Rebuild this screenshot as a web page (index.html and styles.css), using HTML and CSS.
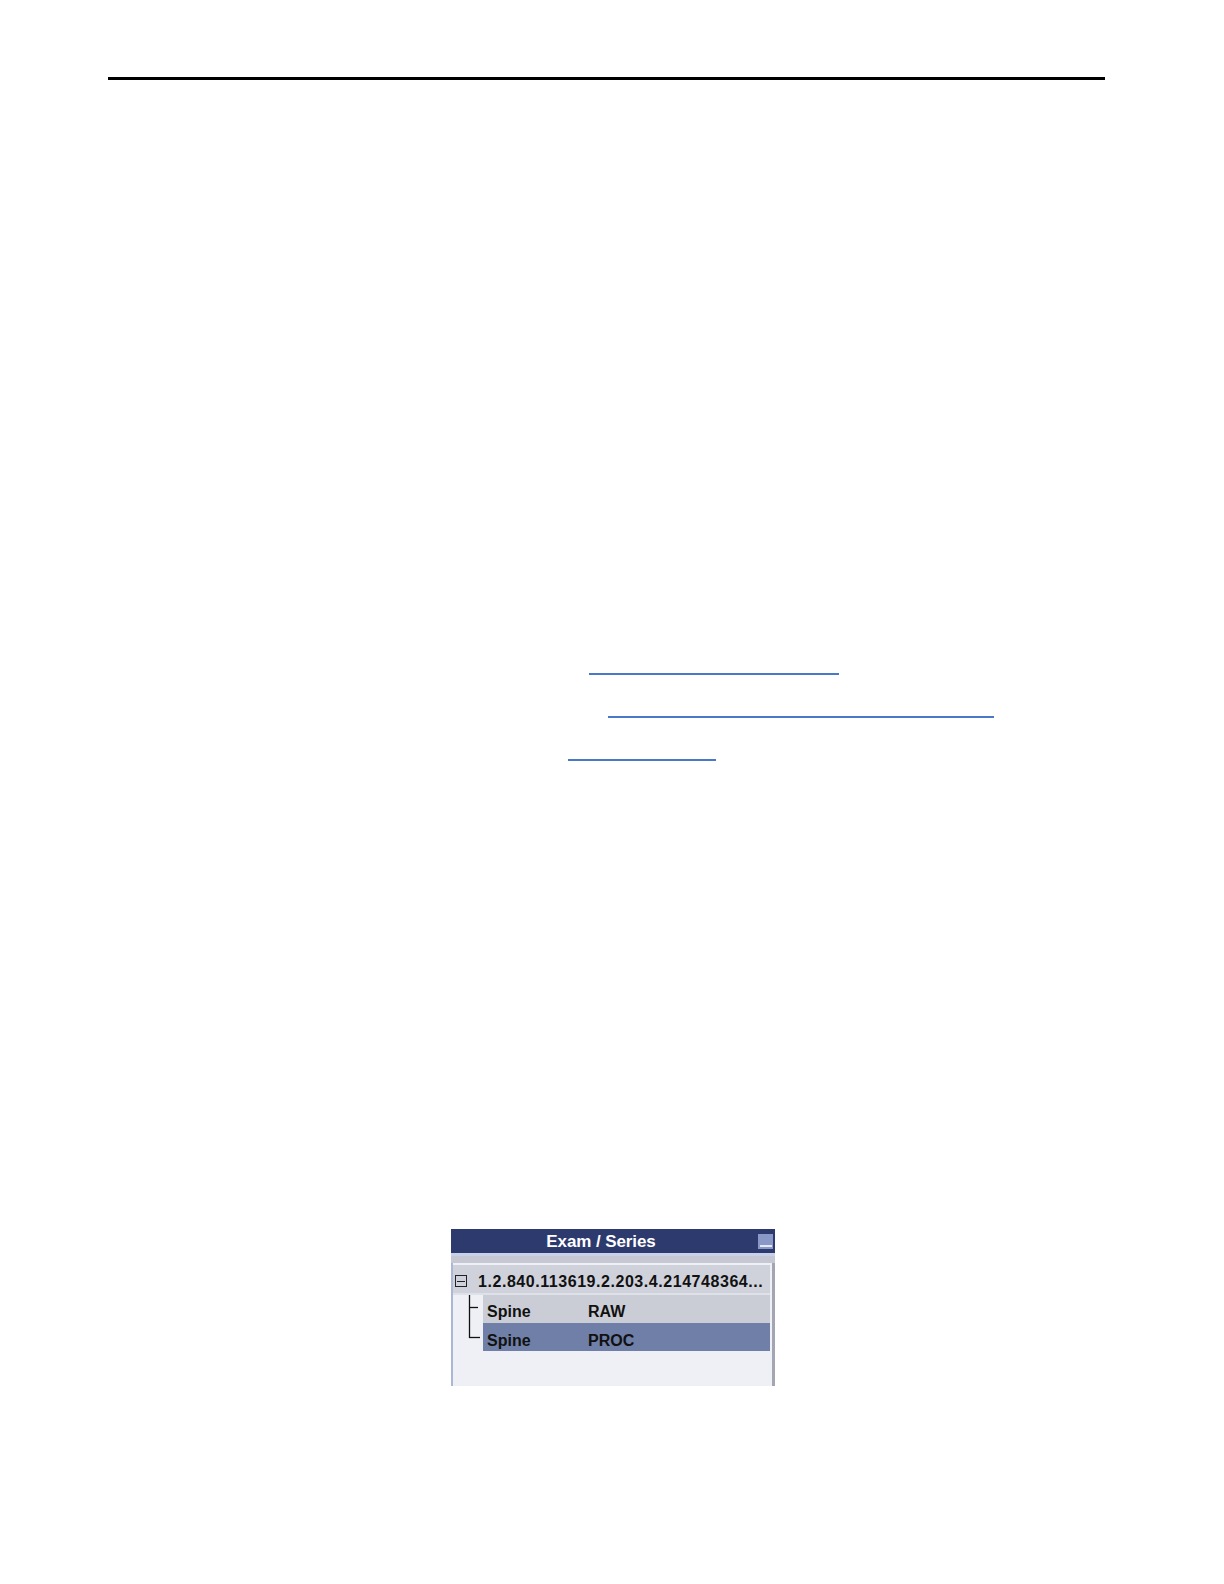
FILE: index.html
```html
<!DOCTYPE html>
<html>
<head>
<meta charset="utf-8">
<link rel="stylesheet" href="styles.css">
</head>
<body>
<div class="page">
  <div class="top-rule"></div>
  <div class="links">
    <div class="link-line l1"></div>
    <div class="link-line l2"></div>
    <div class="link-line l3"></div>
  </div>
  <div class="figure">
    <div class="panel">
      <div class="panel-header">
        <span class="panel-title">Exam / Series</span>
        <span class="min-btn"><span class="min-bar"></span></span>
      </div>
      <div class="panel-strip"></div>
      <div class="panel-body">
        <div class="exam-row">
          <span class="collapse-box"><span class="collapse-dash"></span></span>
          <span class="exam-id">1.2.840.113619.2.203.4.214748364...</span>
        </div>
        <div class="children">
          <svg class="tree" width="30" height="56" viewBox="0 0 30 56">
            <line x1="16.5" y1="0" x2="16.5" y2="43" stroke="#111" stroke-width="1.3"/>
            <line x1="16" y1="12.5" x2="25" y2="12.5" stroke="#111" stroke-width="1.3"/>
            <line x1="16" y1="42.5" x2="27" y2="42.5" stroke="#111" stroke-width="1.3"/>
          </svg>
          <div class="series-list">
            <div class="series-row">
              <span class="series-name">Spine</span>
              <span class="series-type">RAW</span>
            </div>
            <div class="series-row selected">
              <span class="series-name">Spine</span>
              <span class="series-type">PROC</span>
            </div>
          </div>
        </div>
      </div>
    </div>
  </div>
</div>
</body>
</html>
```

FILE: styles.css
```css
html, body {
  margin: 0;
  padding: 0;
  background: #ffffff;
}

.page {
  width: 1224px;
  height: 1584px;
  overflow: hidden;
  font-family: "Liberation Sans", Arial, sans-serif;
}

.top-rule {
  margin: 77px 119px 0 108px;
  height: 3px;
  background: #000000;
}

.links {
  margin-top: 593px;
  display: flex;
  flex-direction: column;
  gap: 41px;
}

.link-line {
  height: 0;
  border-top: 2px solid #4a78c8;
}

.l1 { margin-left: 589px; width: 250px; }
.l2 { margin-left: 608px; width: 386px; }
.l3 { margin-left: 568px; width: 148px; }

.figure {
  margin-top: 468px;
  padding-left: 451px;
}

.panel {
  width: 324px;
  display: flex;
  flex-direction: column;
}

.panel-header {
  position: relative;
  box-sizing: border-box;
  height: 24px;
  padding: 2px 24px 0 0;
  background: #2d3a6d;
  display: flex;
  align-items: flex-start;
  justify-content: center;
}

.panel-title {
  color: #ffffff;
  font-weight: bold;
  font-size: 17px;
  line-height: 22px;
  letter-spacing: -0.1px;
}

.min-btn {
  position: absolute;
  right: 2px;
  top: 5px;
  width: 15px;
  height: 15px;
  background: #8a98c8;
  display: flex;
  align-items: flex-end;
  justify-content: center;
}

.min-bar {
  width: 12px;
  height: 2px;
  margin-bottom: 2px;
  background: #e4e8f4;
}

.panel-strip {
  height: 3px;
  background: #c9d1e8;
  border-bottom: 7px solid #c5c8d3;
}

.panel-body {
  height: 121px;
  background: #eef0f6;
  border-left: 2px solid #aab7da;
  border-right: 3px solid #a3a6b2;
  padding-top: 2px;
  display: flex;
  flex-direction: column;
}

.exam-row {
  box-sizing: border-box;
  height: 30px;
  margin-right: 2px;
  padding-top: 8px;
  background: #d0d2db;
  display: flex;
  align-items: flex-start;
  border-bottom: 2px solid #dfe1e9;
}

.collapse-box {
  width: 10px;
  height: 10px;
  margin: 2px 0 0 2px;
  border: 1px solid #222;
  display: flex;
  align-items: center;
  justify-content: center;
}

.collapse-dash {
  width: 8px;
  height: 1px;
  background: #222;
}

.exam-id {
  margin-left: 11px;
  font-weight: bold;
  font-size: 16px;
  line-height: 18px;
  color: #111111;
  white-space: nowrap;
  letter-spacing: 0.55px;
}

.children {
  display: flex;
}

.tree {
  display: block;
  flex: none;
}

.series-list {
  flex: 1;
  margin-right: 2px;
  display: flex;
  flex-direction: column;
}

.series-row {
  box-sizing: border-box;
  height: 28px;
  padding: 8px 0 0 4px;
  display: grid;
  grid-template-columns: 101px 1fr;
  align-items: start;
  background: #cbcdd6;
  font-weight: bold;
  font-size: 16px;
  line-height: 18px;
  color: #111111;
}

.series-row.selected {
  padding-top: 9px;
  background: #6f7fa7;
}
```
